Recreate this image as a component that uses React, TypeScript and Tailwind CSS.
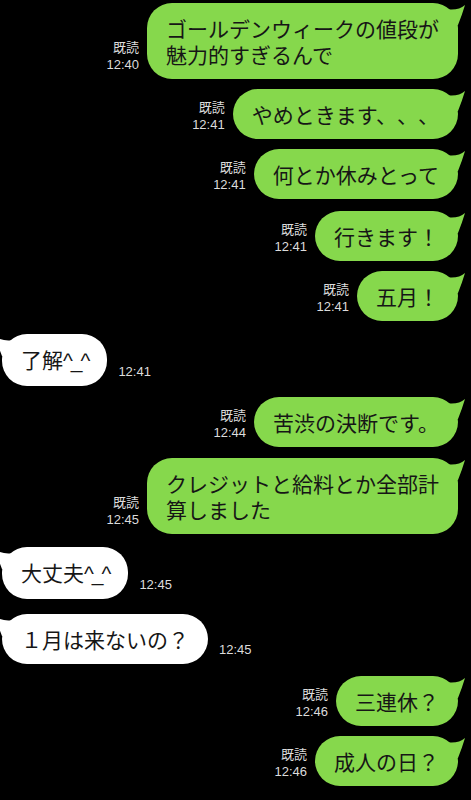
import React from "react";

type Msg = {
  me: boolean;
  lines: string[];
  time: string;
  mt: string;
};

const messages: Msg[] = [
  { me: true, lines: ["ゴールデンウィークの値段が", "魅力的すぎるんで"], time: "12:40", mt: "mt-[3px]" },
  { me: true, lines: ["やめときます、、、"], time: "12:41", mt: "mt-[10px]" },
  { me: true, lines: ["何とか休みとって"], time: "12:41", mt: "mt-[10px]" },
  { me: true, lines: ["行きます！"], time: "12:41", mt: "mt-[12px]" },
  { me: true, lines: ["五月！"], time: "12:41", mt: "mt-[10px]" },
  { me: false, lines: ["了解^_^"], time: "12:41", mt: "mt-[13px]" },
  { me: true, lines: ["苦渋の決断です。"], time: "12:44", mt: "mt-[11px]" },
  { me: true, lines: ["クレジットと給料とか全部計", "算しました"], time: "12:45", mt: "mt-[11px]" },
  { me: false, lines: ["大丈夫^_^"], time: "12:45", mt: "mt-[13px]" },
  { me: false, lines: ["１月は来ないの？"], time: "12:45", mt: "mt-[15px]" },
  { me: true, lines: ["三連休？"], time: "12:46", mt: "mt-[12px]" },
  { me: true, lines: ["成人の日？"], time: "12:46", mt: "mt-[10px]" },
];

const jp = "font-['Noto_Sans_CJK_JP','Noto_Sans',sans-serif]";
const meta = "font-['Liberation_Sans','Noto_Sans_CJK_JP',sans-serif]";

function Tail({ me }: { me: boolean }) {
  return (
    <svg
      width="26"
      height="24"
      viewBox="0 0 26 24"
      className={
        me
          ? "absolute right-[-8px] top-0"
          : "absolute left-[-8px] top-0 -scale-x-100"
      }
    >
      <path
        d="M6 6 Q18 8 25 2 Q22 12 18 22 L6 22 Z"
        fill={me ? "#86d84c" : "#ffffff"}
      />
    </svg>
  );
}

// ^_^ faces are set in a narrower latin face, like the phone does
function Line({ text }: { text: string }) {
  const i = text.indexOf("^_^");
  if (i < 0) return <div>{text}</div>;
  return (
    <div>
      {text.slice(0, i)}
      <span className="font-['Liberation_Sans',sans-serif] tracking-[-2px]">^_^</span>
    </div>
  );
}

function Bubble({ m }: { m: Msg }) {
  return (
    <div
      className={`relative rounded-[25px] px-[19px] pt-[12px] pb-[12px] text-[21px] leading-[26px] text-[#161616] whitespace-nowrap [text-spacing-trim:space-all] ${jp} ${
        m.me ? "bg-[#86d84c]" : "bg-white"
      }`}
    >
      <Tail me={m.me} />
      <div className="relative">
        {m.lines.map((l, i) => (
          <Line key={i} text={l} />
        ))}
      </div>
    </div>
  );
}

export default function App() {
  return (
    <div className="min-h-[800px] w-[471px] bg-black overflow-hidden">
      {messages.map((m, i) =>
        m.me ? (
          <div key={i} className={`flex justify-end items-end gap-[8px] pr-[13px] ${m.mt}`}>
            <div className={`flex flex-col items-end pb-[5px] text-[13px] leading-[18px] text-[#dcdcdc] ${meta}`}>
              <span className={jp}>既読</span>
              <span>{m.time}</span>
            </div>
            <Bubble m={m} />
          </div>
        ) : (
          <div key={i} className={`flex justify-start items-end gap-[11px] pl-[2px] ${m.mt}`}>
            <Bubble m={m} />
            <div className={`pb-[5px] text-[13px] leading-[18px] text-[#dcdcdc] ${meta}`}>
              {m.time}
            </div>
          </div>
        )
      )}
    </div>
  );
}
